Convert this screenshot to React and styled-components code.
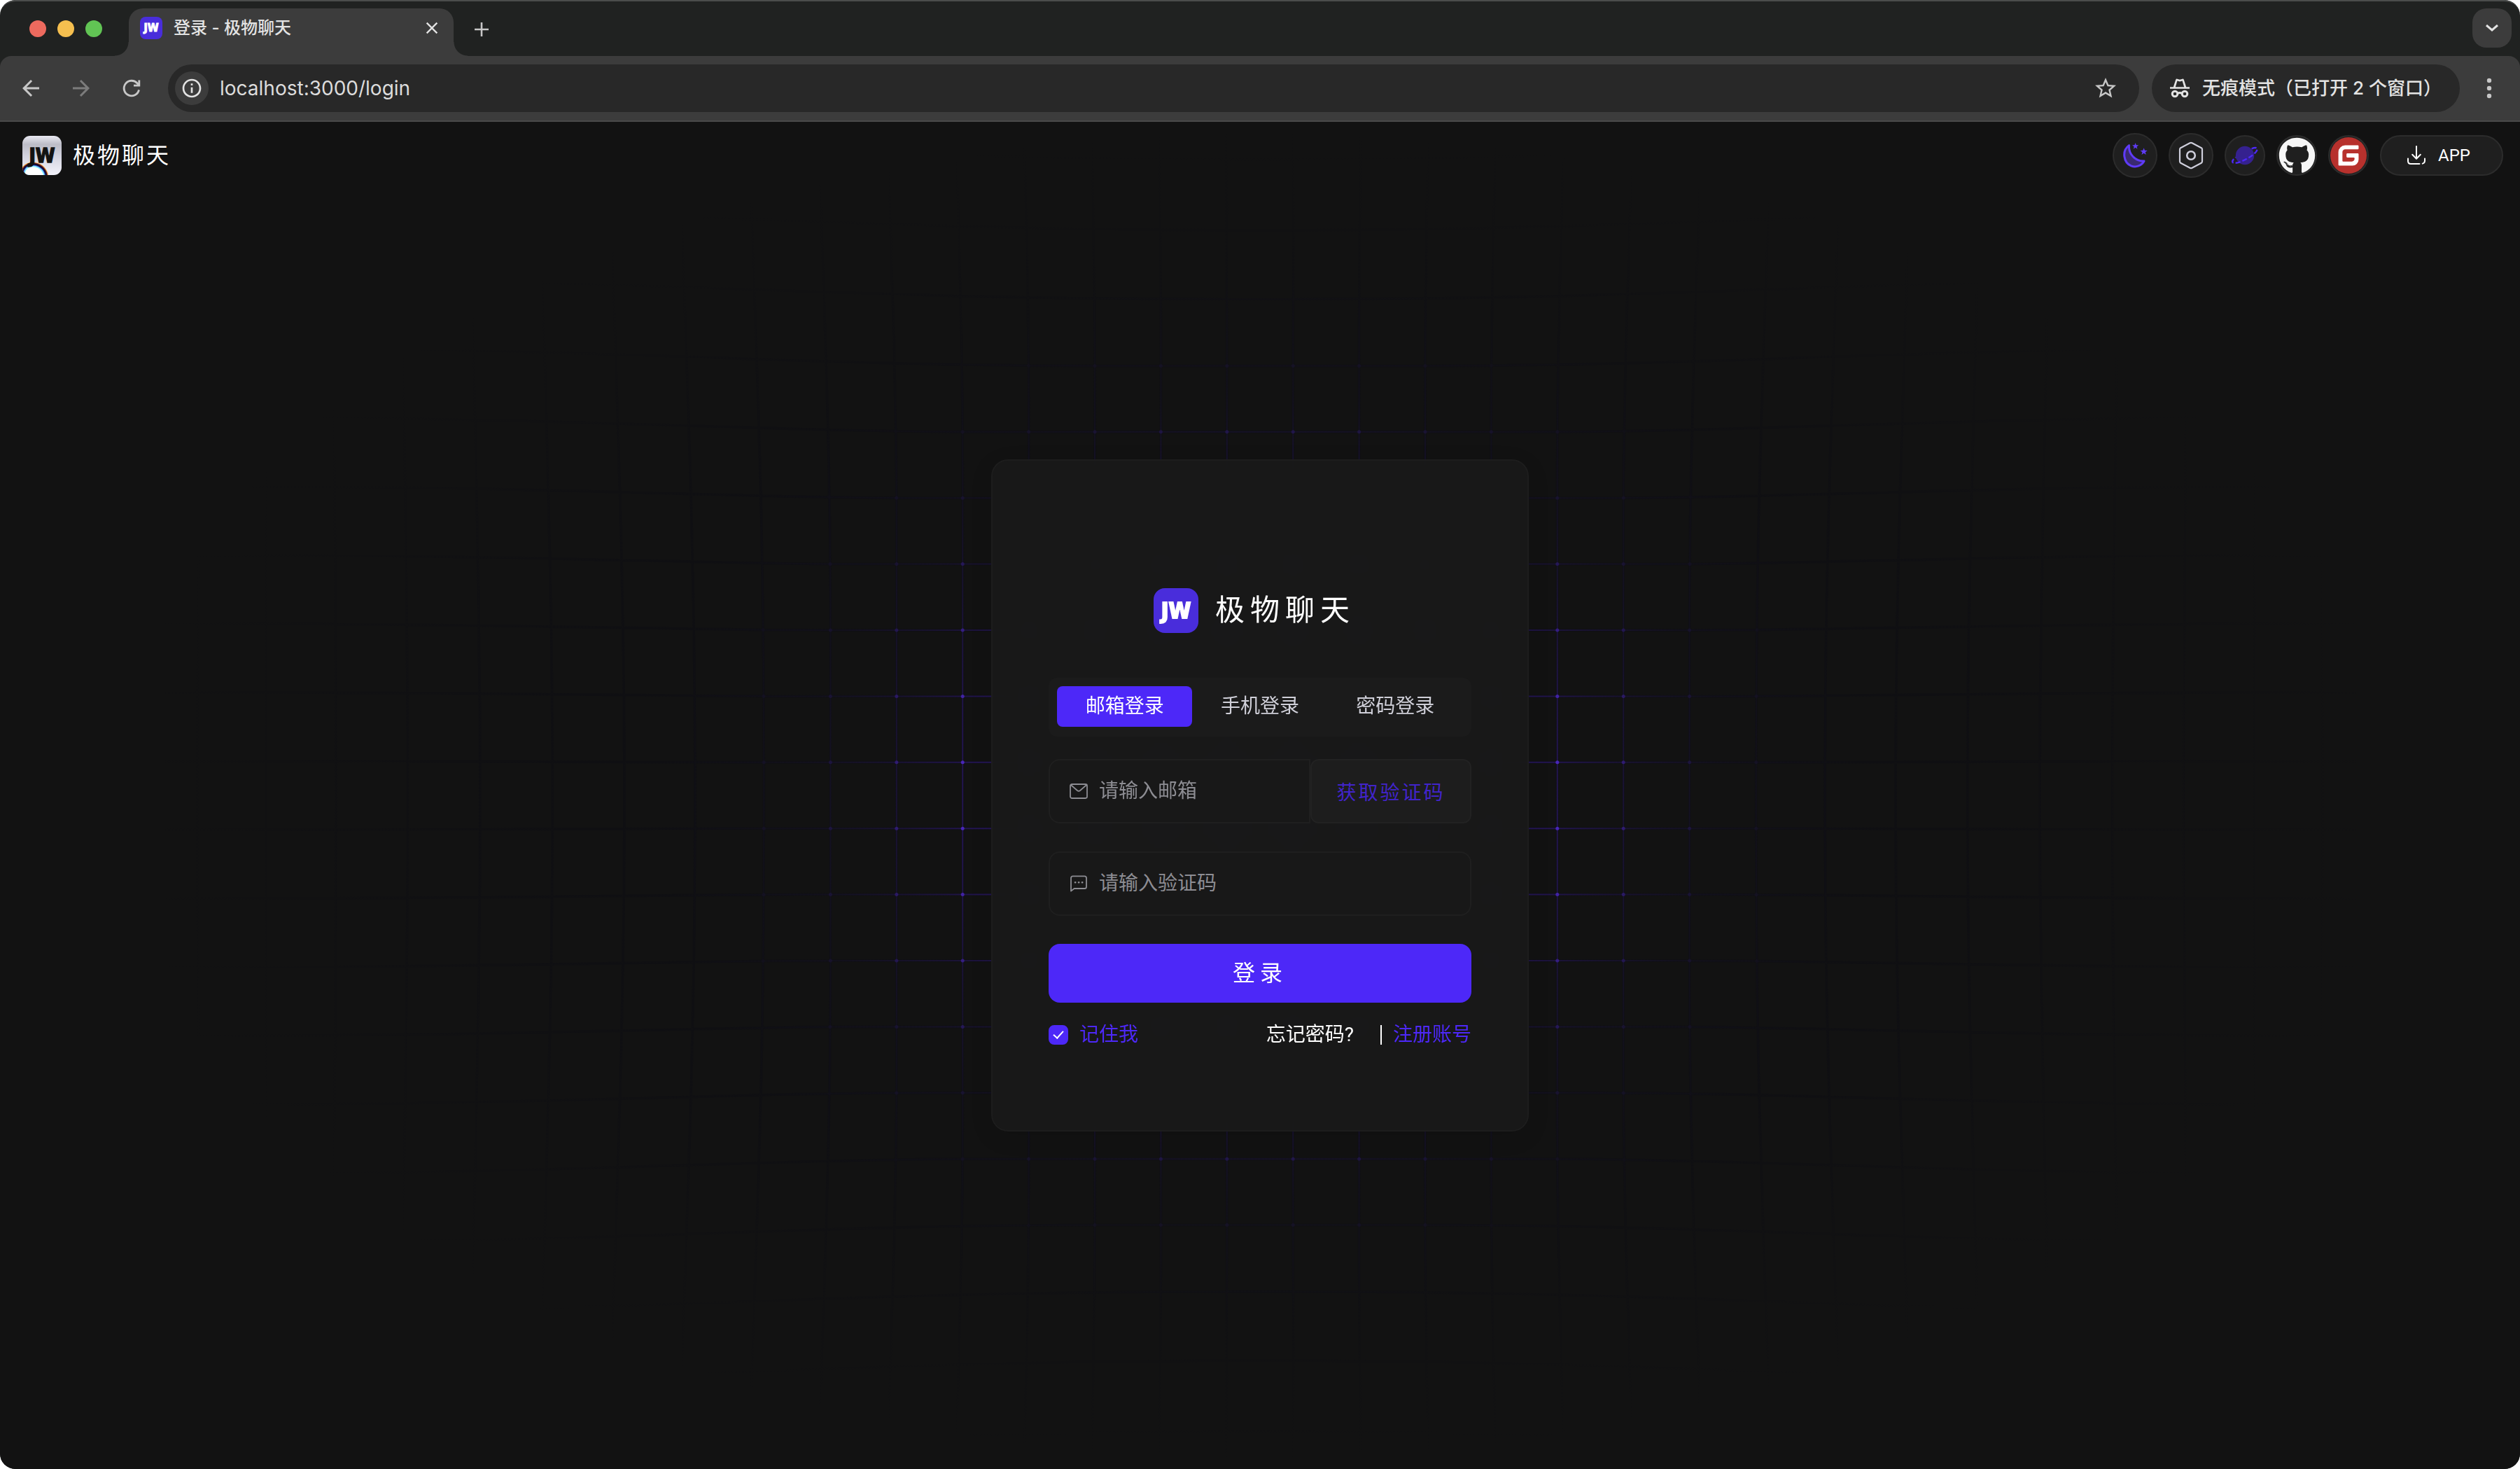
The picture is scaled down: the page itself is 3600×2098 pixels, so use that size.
import React, { useState } from "react";
import styled, { createGlobalStyle, css } from "styled-components";
import {
  MdArrowBack,
  MdArrowForward,
  MdClose,
  MdInfoOutline,
  MdStarBorder,
} from "react-icons/md";
import { FaGithub } from "react-icons/fa";

const color = {
  strip: "#202221",
  toolbar: "#3c3c3c",
  field: "#282828",
  page: "#121212",
  accent: "#4d28f8",
  brand: "#492ddb",
  text: "#ffffff",
  muted: "#8d8d93",
};

const GlobalStyle = createGlobalStyle`
  *, *::before, *::after { box-sizing: border-box; }
  body {
    margin: 0;
    background: #ffffff;
    font-family: Roboto, "Noto Sans CJK SC", sans-serif;
    color: ${color.text};
  }
  button, input { font: inherit; color: inherit; }
  button { padding: 0; border: 0; background: none; cursor: pointer; }
  a { color: inherit; text-decoration: none; }
  svg { display: block; flex: none; }
`;

const Window = styled.div`
  display: flex;
  flex-direction: column;
  min-height: 100vh;
  border-radius: 22px;
  overflow: hidden;
  background: ${color.strip};
`;

/* ---------- browser chrome ---------- */

const TabStrip = styled.div`
  display: flex;
  height: 80px;
  padding: 10px 12px 0 42px;
  border-top: 2px solid #4b4d4c;
  border-radius: 22px 22px 0 0;
  font-family: Inter, "Noto Sans CJK SC", sans-serif;
`;

const TrafficLights = styled.div`
  display: flex;
  gap: 16px;
  margin: 17px 18px 0 0;
`;

const Light = styled.span`
  width: 24px;
  height: 24px;
  border-radius: 50%;
  background: ${(p) => p.$color};
`;

const Flare = styled.span`
  align-self: flex-end;
  width: 20px;
  height: 20px;
  background: radial-gradient(
    circle at ${(p) => (p.$side === "left" ? "0 0" : "100% 0")},
    transparent 19px,
    ${color.toolbar} 20px
  );
`;

const BrowserTab = styled.div`
  display: flex;
  align-items: center;
  gap: 16px;
  width: 464px;
  padding: 0 17px 12px 16px;
  border-radius: 20px 20px 0 0;
  background: ${color.toolbar};
`;

const BrowserTabTitle = styled.span`
  flex: 1;
  font-size: 24px;
  line-height: 32px;
  font-weight: 500;
  color: #e3e3e3;
`;

const TabClose = styled.button`
  color: #e3e3e3;
`;

const NewTab = styled.button`
  display: grid;
  place-items: center;
  width: 40px;
  height: 60px;
  color: #c7c7c7;
`;

const TabSearch = styled.button`
  display: grid;
  place-items: center;
  width: 56px;
  height: 56px;
  margin-left: auto;
  border-radius: 20px;
  background: ${color.toolbar};
  color: #e3e3e3;
`;

const Toolbar = styled.div`
  display: flex;
  align-items: center;
  gap: 18px;
  padding: 12px 20px 12px 20px;
  border-bottom: 2px solid #4a4a4a;
  border-radius: 16px 16px 0 0;
  background: ${color.toolbar};
  font-family: Inter, "Noto Sans CJK SC", sans-serif;
`;

const NavButtons = styled.div`
  display: flex;
  gap: 24px;
  margin-right: 10px;
`;

const ToolButton = styled.button`
  display: grid;
  place-items: center;
  width: 48px;
  height: 48px;
  border-radius: 50%;
  color: ${(p) => (p.$dim ? "#7c7c7c" : "#c7c7c7")};
  background: ${(p) => (p.$filled ? color.toolbar : "none")};
`;

const AddressBar = styled.div`
  flex: 1;
  display: flex;
  align-items: center;
  gap: 16px;
  height: 68px;
  padding: 0 24px 0 10px;
  border-radius: 34px;
  background: ${color.field};
`;

const AddressInput = styled.input`
  flex: 1;
  min-width: 0;
  padding: 0;
  border: 0;
  outline: 0;
  background: none;
  font-size: 28px;
  line-height: 36px;
  color: #dcdcdc;
`;

const IncognitoChip = styled.button`
  display: flex;
  align-items: center;
  gap: 18px;
  height: 68px;
  padding: 0 26px;
  border-radius: 34px;
  background: ${color.field};
  font-size: 26px;
  line-height: 36px;
  font-weight: 500;
  color: #e3e3e3;
`;

/* ---------- page ---------- */

const Page = styled.div`
  position: relative;
  flex: 1;
  display: grid;
  background: ${color.page};
`;

const Backdrop = styled.svg`
  position: absolute;
  inset: 0;
  width: 100%;
  height: 100%;
`;

const Header = styled.header`
  grid-area: 1 / 1;
  align-self: start;
  position: relative;
  display: flex;
  align-items: center;
  justify-content: space-between;
  height: 96px;
  padding: 0 24px 0 32px;
`;

const HeaderBrand = styled.div`
  display: flex;
  align-items: center;
  gap: 16px;
`;

const HeaderName = styled.span`
  font-size: 32px;
  line-height: 40px;
  letter-spacing: 3px;
`;

const HeaderActions = styled.nav`
  display: flex;
  align-items: center;
  gap: 16px;
`;

const pill = css`
  display: flex;
  align-items: center;
  justify-content: center;
  border: 2px solid #2c2c2c;
  background: #1f1f1f;
`;

const RoundButton = styled.button`
  ${pill}
  width: ${(p) => (p.$small ? 58 : 64)}px;
  height: ${(p) => (p.$small ? 58 : 64)}px;
  border-radius: 50%;
  color: ${(p) => p.$color};
`;

const AppButton = styled.button`
  ${pill}
  gap: 18px;
  width: 176px;
  height: 58px;
  padding-right: 8px;
  border-radius: 29px;
  font-size: 24px;
  line-height: 32px;
`;

const LogoTile = styled.span`
  display: grid;
  place-items: center;
  flex: none;
  width: ${(p) => p.$size}px;
  height: ${(p) => p.$size}px;
  border-radius: ${(p) => p.$size / 4}px;
  background: ${color.brand};
  font-family: "DejaVu Sans Condensed", "DejaVu Sans", sans-serif;
  font-stretch: condensed;
  font-weight: 700;
  font-size: ${(p) => p.$size / 2}px;
  line-height: 1;
  color: #ffffff;
  -webkit-text-stroke: ${(p) => (p.$size > 40 ? 2 : 1)}px #ffffff;
`;

const Main = styled.main`
  grid-area: 1 / 1;
  place-self: center;
  position: relative;
`;

const Card = styled.form`
  display: flex;
  flex-direction: column;
  width: 768px;
  padding: 182px 80px 122px;
  border: 2px solid #1d1d1d;
  border-radius: 24px;
  background: rgba(25, 25, 25, 0.92);
  backdrop-filter: blur(16px);
  box-shadow: 0 8px 32px rgba(0, 0, 0, 0.1);
`;

const CardBrand = styled.div`
  display: flex;
  align-items: center;
  justify-content: center;
  gap: 24px;
  height: 64px;
  margin-bottom: 64px;
`;

const CardName = styled.h1`
  margin: 0 16px 0 0;
  font-size: 42px;
  line-height: 56px;
  font-weight: 400;
  letter-spacing: 8px;
`;

const Tabs = styled.div`
  display: grid;
  grid-template-columns: repeat(3, 1fr);
  height: 84px;
  margin-bottom: 32px;
  padding: 12px 12px 14px;
  border-radius: 12px;
  background: #1b1b1b;
`;

const Tab = styled.button`
  border-radius: 8px;
  font-size: 28px;
  line-height: 36px;
  color: ${(p) => (p.$active ? "#ffffff" : "#cfcfd8")};
  background: ${(p) => (p.$active ? color.accent : "transparent")};
`;

const Row = styled.div`
  display: flex;
  margin-bottom: 40px;
`;

const Field = styled.label`
  flex: 1;
  min-width: 0;
  display: flex;
  align-items: center;
  gap: 16px;
  height: 92px;
  padding: 0 28px;
  border: 2px solid #1f1f1f;
  border-radius: ${(p) => (p.$joined ? "16px 0 0 16px" : "16px")};
  background: #181818;
  color: ${color.muted};
`;

const TextInput = styled.input`
  flex: 1;
  min-width: 0;
  padding: 0;
  border: 0;
  outline: 0;
  background: none;
  font-size: 28px;
  line-height: 40px;
  color: #ffffff;
  &::placeholder { color: ${color.muted}; opacity: 1; }
`;

const CodeButton = styled.button`
  width: 230px;
  border: 2px solid #222222;
  border-radius: 12px;
  background: #1d1d1d;
  font-size: 28px;
  letter-spacing: 3px;
  color: #4124cb;
`;

const Submit = styled.button`
  height: 84px;
  margin-bottom: 32px;
  border-radius: 16px;
  background: ${color.accent};
  font-size: 32px;
  line-height: 40px;
  letter-spacing: 7px;
  color: #ffffff;
`;

const CardFooter = styled.div`
  display: flex;
  align-items: center;
  justify-content: space-between;
  height: 28px;
  font-size: 28px;
  line-height: 28px;
`;

const Remember = styled.label`
  display: flex;
  align-items: center;
  gap: 16px;
  color: ${color.accent};
`;

const Checkbox = styled.input`
  appearance: none;
  display: grid;
  place-items: center;
  width: 28px;
  height: 28px;
  margin: 0;
  border: 2px solid ${color.accent};
  border-radius: 8px;
  &:checked { background: ${color.accent}; }
  &:checked::before {
    content: "";
    width: 8px;
    height: 14px;
    margin-bottom: 4px;
    border: solid #ffffff;
    border-width: 0 2px 2px 0;
    transform: rotate(42deg);
  }
`;

const Links = styled.div`
  display: flex;
  align-items: center;
`;

const ForgotLink = styled.a`
  padding-right: 38px;
`;

const RegisterLink = styled.a`
  padding-left: 16px;
  border-left: 2px solid #ffffff;
  color: ${color.accent};
`;

/* ---------- background grid ---------- */

const CELL = 94.4;

// Pushes a point away from the centre, more the farther out it lies.
function warp(x, y) {
  const r = Math.hypot(x, y) || 1;
  const t = Math.min(1, Math.max(0, (r - 650) / 850));
  const k = 1 + (55 * t * t * (3 - 2 * t)) / r;
  return [(x * k).toFixed(1), (y * k).toFixed(1)];
}

function buildGrid() {
  const at = (i) => (i + 0.5) * CELL;
  const lines = [];
  const dots = [];
  for (let i = -16; i < 16; i++) {
    const vertical = [];
    const horizontal = [];
    for (let s = -32; s <= 32; s++) {
      vertical.push(warp(at(i), (s * CELL) / 2).join(" "));
      horizontal.push(warp((s * CELL) / 2, at(i)).join(" "));
    }
    lines.push("M" + vertical.join("L"), "M" + horizontal.join("L"));
    for (let j = -16; j < 16; j++) {
      if (Math.hypot(at(i), at(j)) < 900) dots.push(warp(at(i), at(j)));
    }
  }
  return { path: lines.join(""), dots };
}

const grid = buildGrid();

function GridBackdrop() {
  return (
    <Backdrop viewBox="-1800 -962 3600 1924" preserveAspectRatio="xMidYMid slice" aria-hidden="true">
      <defs>
        <radialGradient id="dark" gradientUnits="userSpaceOnUse" cx="0" cy="0" r="1650" gradientTransform="scale(1 .58)">
          <stop offset="0" stopColor="#0f0f13" />
          <stop offset=".6" stopColor="#0f0f12" stopOpacity=".9" />
          <stop offset="1" stopColor="#0f0f12" stopOpacity="0" />
        </radialGradient>
        <radialGradient id="glow" gradientUnits="userSpaceOnUse" cx="0" cy="0" r="860" gradientTransform="scale(1 .88)">
          <stop offset="0" stopColor="#4d28f8" stopOpacity=".6" />
          <stop offset=".49" stopColor="#4820c8" stopOpacity=".34" />
          <stop offset=".62" stopColor="#4420c0" stopOpacity=".17" />
          <stop offset=".76" stopColor="#3c20b0" stopOpacity=".06" />
          <stop offset="1" stopColor="#3c20b0" stopOpacity="0" />
        </radialGradient>
        <radialGradient id="spark" gradientUnits="userSpaceOnUse" cx="0" cy="0" r="800" gradientTransform="scale(1 .88)">
          <stop offset="0" stopColor="#5a30ff" />
          <stop offset=".53" stopColor="#5a2ee8" stopOpacity=".72" />
          <stop offset=".66" stopColor="#5028d0" stopOpacity=".38" />
          <stop offset=".8" stopColor="#4424c0" stopOpacity=".12" />
          <stop offset="1" stopColor="#4424c0" stopOpacity="0" />
        </radialGradient>
      </defs>
      <path d={grid.path} fill="none" stroke="url(#dark)" strokeWidth="4" />
      <path d={grid.path} fill="none" stroke="url(#glow)" strokeWidth="2" />
      <path
        d={grid.dots.map(([x, y]) => `M${x} ${y}h.01`).join("")}
        fill="none"
        stroke="url(#spark)"
        strokeWidth="5"
        strokeLinecap="round"
      />
    </Backdrop>
  );
}

/* ---------- icons ---------- */

const line = { fill: "none", stroke: "currentColor", strokeLinecap: "round", strokeLinejoin: "round" };

const ReloadIcon = () => (
  <svg width="36" height="36" viewBox="0 0 24 24" {...line} strokeWidth="1.9" strokeLinecap="butt" strokeLinejoin="miter">
    <path d="M19 13.6A7.2 7.2 0 1 1 17.3 7.2L19 9" />
    <path d="M19.2 4.4V9.4H14" />
  </svg>
);

const PlusIcon = () => (
  <svg width="20" height="20" viewBox="0 0 20 20" {...line} strokeWidth="2.6" strokeLinecap="butt">
    <path d="M10 0V20M0 10H20" />
  </svg>
);

const ChevronIcon = () => (
  <svg width="18" height="10" viewBox="0 0 18 10" {...line} strokeWidth="3" strokeLinecap="butt" strokeLinejoin="miter">
    <path d="M1 1L9 8L17 1" />
  </svg>
);

const DotsIcon = () => (
  <svg width="8" height="30" viewBox="0 0 8 30" fill="currentColor">
    <circle cx="4" cy="4" r="3.2" />
    <circle cx="4" cy="15" r="3.2" />
    <circle cx="4" cy="26" r="3.2" />
  </svg>
);

const IncognitoIcon = () => (
  <svg width="28" height="28" viewBox="0 0 28 28" fill="currentColor">
    <path fillRule="evenodd" d="M0 12.2H4.8L8.2 1.8Q8.8 .2 10.4 .7L14 1.8L17.6 .7Q19.2 .2 19.8 1.8L23.2 12.2H28V14.8H0ZM7.8 12.2H20.2L17.6 3.6L14 4.6L10.4 3.6Z" />
    <g fill="none" stroke="currentColor" strokeWidth="3">
      <circle cx="7" cy="22" r="3.8" />
      <circle cx="21" cy="22" r="3.8" />
      <path d="M10.8 21.4Q14 19.6 17.2 21.4" />
    </g>
  </svg>
);

const star = (x, y, r) => {
  let d = "";
  for (let i = 0; i < 10; i++) {
    const a = (Math.PI / 5) * i - Math.PI / 2;
    const q = i % 2 ? r * 0.42 : r;
    d += `${i ? "L" : "M"}${(x + q * Math.cos(a)).toFixed(2)} ${(y + q * Math.sin(a)).toFixed(2)}`;
  }
  return d + "Z";
};

const MoonIcon = () => (
  <svg width="36" height="36" viewBox="0 0 36 36">
    <path
      d="M9.5 3.6C8.6 15.6 18 26.6 31 26C27.6 32.6 19.6 35.6 12.4 32.8C1.8 28.6-1.4 11.4 9.5 3.6Z"
      fill="#3a2a70"
      stroke="#5f3bf7"
      strokeWidth="3"
      strokeLinejoin="round"
    />
    <path d={star(18.6, 4.8, 4.8) + star(30.6, 12.6, 5.4)} fill="#5f3bf7" />
  </svg>
);

const NutIcon = () => (
  <svg width="36" height="40" viewBox="0 0 36 40" {...line} strokeWidth="2.2">
    <path d="M16.4 2.2Q18 1.4 19.6 2.2L32.8 9.2Q34 10 34 11.4V28.6Q34 30 32.8 30.8L19.6 37.8Q18 38.6 16.4 37.8L3.2 30.8Q2 30 2 28.6V11.4Q2 10 3.2 9.2Z" />
    <circle cx="18" cy="20" r="5.8" strokeWidth="2.6" />
  </svg>
);

const PlanetIcon = () => (
  <svg width="38" height="28" viewBox="0 0 38 28">
    <circle cx="19" cy="14" r="13.2" fill="#35218f" />
    <path
      d="M28.6 4.4C33 2.6 36.6 2.4 36.6 5C36.6 9 29 15 20.6 19.4C12 24 2.6 26.6 1.4 23.6C.6 21.4 2.8 19 6 16.6"
      fill="none"
      stroke="#4d28f8"
      strokeWidth="2.4"
      strokeDasharray="7 3"
    />
  </svg>
);

const GiteeIcon = () => (
  <svg width="52" height="52" viewBox="0 0 24 24">
    <circle cx="12" cy="12" r="12" fill="#b7312d" />
    <path
      d="M18.074 5.333c.328 0 .593.266.592.593v1.482a.594.594 0 0 1-.593.592H9.777C8.795 8 8 8.796 8 9.778v5.63c0 .327.266.592.593.592h5.63c.982 0 1.778-.796 1.778-1.778v-.296a.593.593 0 0 0-.592-.593h-4.15a.592.592 0 0 1-.592-.592v-1.482a.593.593 0 0 1 .593-.592h6.815c.327 0 .593.265.593.592v3.408a4 4 0 0 1-4 4H5.926a.593.593 0 0 1-.593-.593V9.778a4.444 4.444 0 0 1 4.445-4.444h8.296z"
      fill="#ffffff"
    />
  </svg>
);

const DownloadIcon = () => (
  <svg width="26" height="28" viewBox="0 0 26 28" {...line} strokeWidth="2">
    <path d="M13 1V18.6M7.2 12.8L13 18.8L18.8 12.8" />
    <path d="M1 18.6V22Q1 26 5 26H17.4M21.8 25.6Q25 24.6 25 21.4V18.6" />
  </svg>
);

const MailIcon = () => (
  <svg width="26" height="22" viewBox="0 0 26 22" {...line} strokeWidth="1.8">
    <rect x="1" y="1" width="24" height="20" rx="2.4" />
    <path d="M1.8 2L11 10Q13 11.6 15 10L24.2 2" />
  </svg>
);

const MessageIcon = () => (
  <svg width="26" height="24" viewBox="0 0 26 24" {...line} strokeWidth="1.8">
    <path d="M2 22.6V4Q2 1.4 4.6 1.4H21.4Q24 1.4 24 4V16.4Q24 19 21.4 19H6.6Z" />
    <path d="M8 10.2H8.2M13 10.2H13.2M18 10.2H18.2" strokeWidth="2.6" />
  </svg>
);

const HeaderLogo = () => (
  <svg width="56" height="56" viewBox="0 0 56 56" role="img" aria-label="JW">
    <defs>
      <linearGradient id="tile" x1="0" y1="0" x2="0" y2="1">
        <stop offset="0" stopColor="#e9e9f2" />
        <stop offset=".22" stopColor="#bcbcc6" />
        <stop offset=".5" stopColor="#d2d2de" />
        <stop offset="1" stopColor="#f2f2fb" />
      </linearGradient>
      <clipPath id="tileClip">
        <rect width="56" height="56" rx="11" />
      </clipPath>
    </defs>
    <g clipPath="url(#tileClip)">
      <rect width="56" height="56" fill="url(#tile)" />
      <g transform="rotate(28 17 56)">
        <ellipse cx="17" cy="56" rx="20.5" ry="18" fill="#e8b640" />
        <ellipse cx="17" cy="56" rx="19.6" ry="17.2" fill="#a8262c" />
        <ellipse cx="17" cy="56" rx="18.8" ry="16.4" fill="#15122e" />
        <ellipse cx="17" cy="56" rx="16.4" ry="14" fill="#3a48d8" />
        <ellipse cx="17" cy="56" rx="15.4" ry="13" fill="#7ef0ff" />
        <ellipse cx="17" cy="56" rx="13.6" ry="11.2" fill="#ffffff" />
      </g>
      <text x="28" y="38" textAnchor="middle" fontFamily="DejaVu Sans Condensed, DejaVu Sans" fontWeight="700" fontSize="28" fill="#121212" stroke="#121212" strokeWidth="1.4">
        JW
      </text>
    </g>
  </svg>
);

const METHODS = ["邮箱登录", "手机登录", "密码登录"];

export default function App() {
  const [method, setMethod] = useState(METHODS[0]);
  const [remember, setRemember] = useState(true);

  return (
    <Window>
      <GlobalStyle />
      <TabStrip>
        <TrafficLights>
          <Light $color="#ed6a5e" />
          <Light $color="#f5bf4f" />
          <Light $color="#61c454" />
        </TrafficLights>
        <Flare $side="left" />
        <BrowserTab>
          <LogoTile $size={32}>JW</LogoTile>
          <BrowserTabTitle>登录 - 极物聊天</BrowserTabTitle>
          <TabClose aria-label="关闭标签页">
            <MdClose size={28} />
          </TabClose>
        </BrowserTab>
        <Flare $side="right" />
        <NewTab aria-label="新标签页">
          <PlusIcon />
        </NewTab>
        <TabSearch aria-label="搜索标签页">
          <ChevronIcon />
        </TabSearch>
      </TabStrip>

      <Toolbar>
        <NavButtons>
          <ToolButton aria-label="后退">
            <MdArrowBack size={36} />
          </ToolButton>
          <ToolButton $dim aria-label="前进">
            <MdArrowForward size={36} />
          </ToolButton>
          <ToolButton aria-label="刷新">
            <ReloadIcon />
          </ToolButton>
        </NavButtons>
        <AddressBar>
          <ToolButton $filled aria-label="网站信息">
            <MdInfoOutline size={32} color="#e3e3e3" />
          </ToolButton>
          <AddressInput aria-label="地址" defaultValue="localhost:3000/login" />
          <ToolButton aria-label="收藏">
            <MdStarBorder size={36} />
          </ToolButton>
        </AddressBar>
        <IncognitoChip>
          <IncognitoIcon />
          无痕模式（已打开 2 个窗口）
        </IncognitoChip>
        <ToolButton aria-label="菜单">
          <DotsIcon />
        </ToolButton>
      </Toolbar>

      <Page>
        <GridBackdrop />
        <Header>
          <HeaderBrand>
            <HeaderLogo />
            <HeaderName>极物聊天</HeaderName>
          </HeaderBrand>
          <HeaderActions>
            <RoundButton aria-label="深色模式">
              <MoonIcon />
            </RoundButton>
            <RoundButton $color="#cfcfdc" aria-label="设置">
              <NutIcon />
            </RoundButton>
            <RoundButton $small aria-label="官网">
              <PlanetIcon />
            </RoundButton>
            <RoundButton $small $color="#f6f6f6" aria-label="GitHub">
              <FaGithub size={53} />
            </RoundButton>
            <RoundButton $small aria-label="Gitee">
              <GiteeIcon />
            </RoundButton>
            <AppButton>
              <DownloadIcon />
              APP
            </AppButton>
          </HeaderActions>
        </Header>

        <Main>
          <Card onSubmit={(e) => e.preventDefault()}>
            <CardBrand>
              <LogoTile $size={64}>JW</LogoTile>
              <CardName>极物聊天</CardName>
            </CardBrand>
            <Tabs role="tablist">
              {METHODS.map((name) => (
                <Tab
                  key={name}
                  type="button"
                  role="tab"
                  aria-selected={name === method}
                  $active={name === method}
                  onClick={() => setMethod(name)}
                >
                  {name}
                </Tab>
              ))}
            </Tabs>
            <Row>
              <Field $joined>
                <MailIcon />
                <TextInput type="email" aria-label="邮箱" placeholder="请输入邮箱" />
              </Field>
              <CodeButton type="button">获取验证码</CodeButton>
            </Row>
            <Row>
              <Field>
                <MessageIcon />
                <TextInput aria-label="验证码" placeholder="请输入验证码" />
              </Field>
            </Row>
            <Submit type="submit">登录</Submit>
            <CardFooter>
              <Remember>
                <Checkbox
                  type="checkbox"
                  checked={remember}
                  onChange={(e) => setRemember(e.target.checked)}
                />
                记住我
              </Remember>
              <Links>
                <ForgotLink href="#forgot">忘记密码?</ForgotLink>
                <RegisterLink href="#register">注册账号</RegisterLink>
              </Links>
            </CardFooter>
          </Card>
        </Main>
      </Page>
    </Window>
  );
}
